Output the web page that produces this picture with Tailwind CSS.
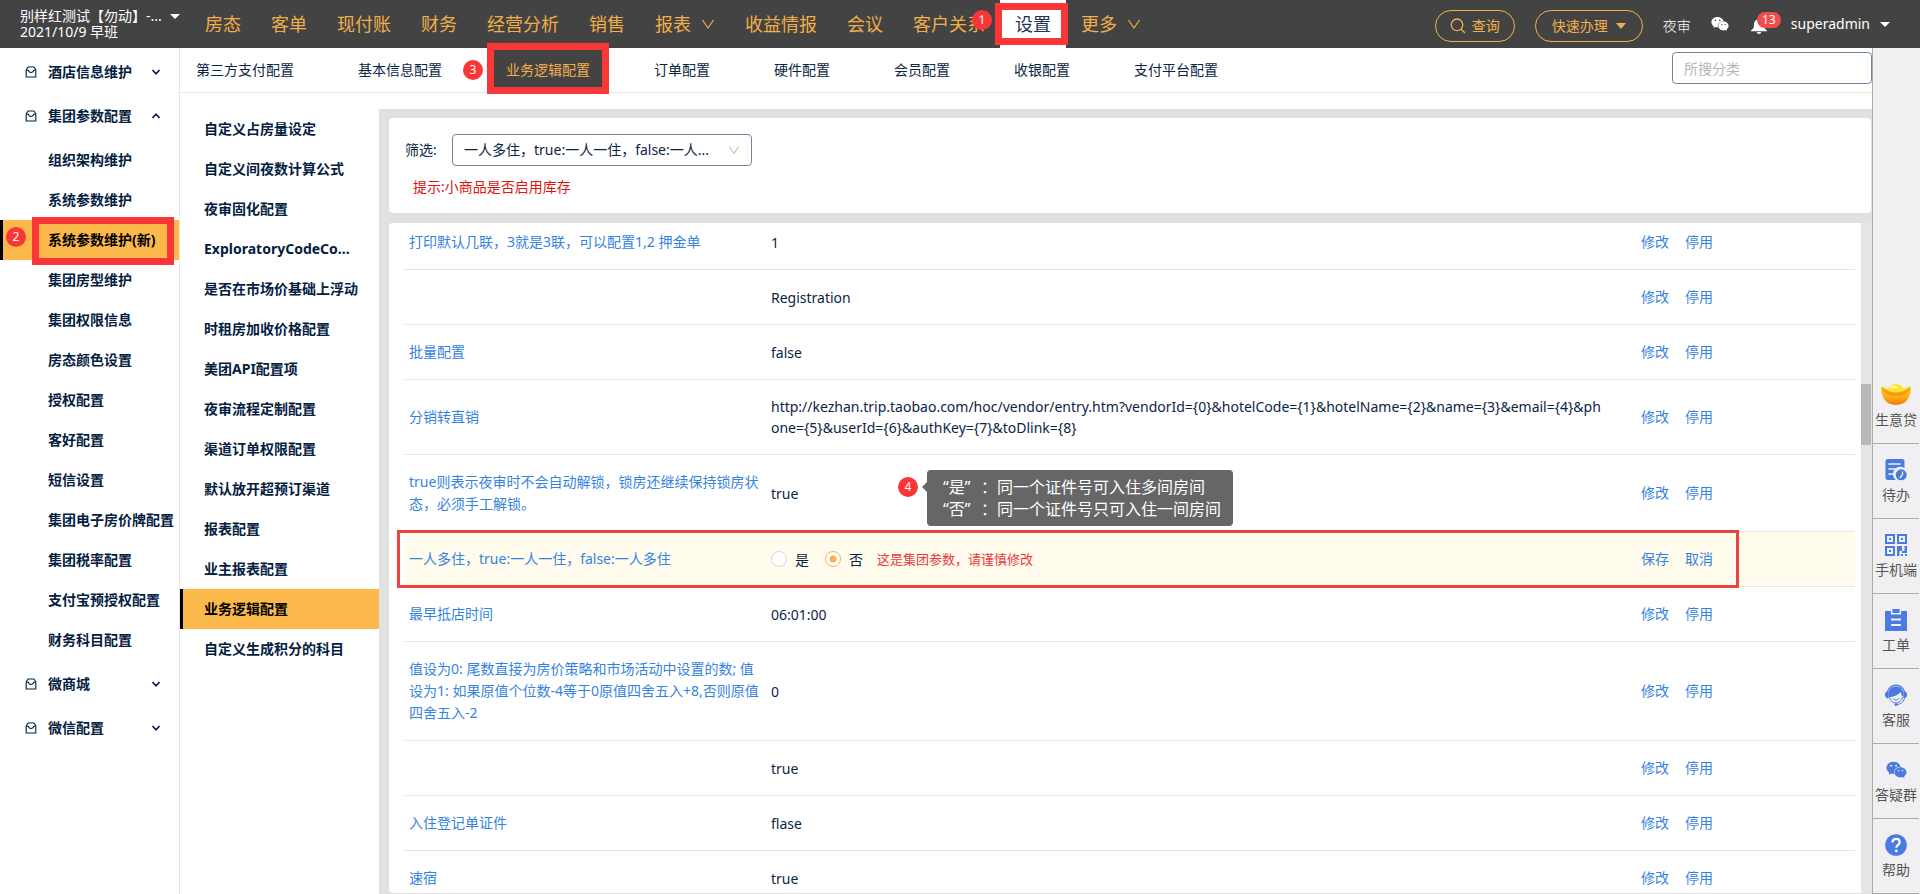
<!DOCTYPE html>
<html lang="zh-CN">
<head>
<meta charset="utf-8">
<title>业务逻辑配置</title>
<script src="https://cdn.jsdelivr.net/npm/@tailwindcss/browser@4"></script>
</head>
<body class="flex h-screen flex-col overflow-hidden bg-white font-['Noto_Sans','Noto_Sans_CJK_SC',sans-serif] text-sm text-[#0b2545]">
<svg class="hidden">
  <symbol id="wechat" viewBox="0 0 576 512"><path fill="currentColor" d="M385.2 167.6c6.4 0 12.6.3 18.8 1.1C387.4 90.3 303.3 32 207.7 32 100.5 32 13 104.8 13 197.4c0 53.4 29.3 97.5 77.9 131.6l-19.3 58.6 68-34.1c24.4 4.8 43.8 9.7 68.2 9.7 6.2 0 12.1-.3 18.3-.8-4-12.9-6.2-26.6-6.2-40.8-.1-84.9 72.9-154 165.3-154zm-104.5-52.9c14.5 0 24.2 9.7 24.2 24.4 0 14.5-9.7 24.2-24.2 24.2-14.8 0-29.3-9.7-29.3-24.2.1-14.7 14.6-24.4 29.3-24.4zm-136.4 48.6c-14.5 0-29.3-9.7-29.3-24.2 0-14.8 14.8-24.4 29.3-24.4 14.8 0 24.4 9.7 24.4 24.4 0 14.6-9.6 24.2-24.4 24.2zM563 319.4c0-77.9-77.9-141.3-165.4-141.3-92.7 0-165.4 63.4-165.4 141.3S305 460.7 397.6 460.7c19.3 0 38.9-5.1 58.6-9.9l53.4 29.3-14.8-48.6C534 402.1 563 363.2 563 319.4zm-219.1-24.5c-9.7 0-19.3-9.7-19.3-19.6 0-9.7 9.7-19.3 19.3-19.3 14.8 0 24.4 9.7 24.4 19.3 0 10-9.7 19.6-24.4 19.6zm107.1 0c-9.7 0-19.3-9.7-19.3-19.6 0-9.7 9.7-19.3 19.3-19.3 14.5 0 24.4 9.7 24.4 19.3.1 10-9.9 19.6-24.4 19.6z"/></symbol>
  <symbol id="pouch" viewBox="0 0 12 12"><g fill="none" stroke="currentColor" stroke-width="1.1"><path d="M3 1h6l1.8 3v7H1.2V4z"/><path d="M1.2 4.2h2.3c.4 3 4.6 3 5 0h2.3"/></g></symbol>
  <symbol id="down" viewBox="0 0 10 10"><path d="M1.5 3 5 6.8 8.500 3" fill="none" stroke="currentColor" stroke-width="1.7"/></symbol>
  <symbol id="up" viewBox="0 0 10 10"><path d="M1.5 7 5 3.200 8.500 7" fill="none" stroke="currentColor" stroke-width="1.7"/></symbol>
  <symbol id="thin" viewBox="0 0 14 14"><path d="M1.500 3 7 11l5.500-8" fill="none" stroke="currentColor" stroke-width="1.2"/></symbol>
  <symbol id="caret" viewBox="0 0 10 5"><path d="M0 0h10L5 5z" fill="currentColor"/></symbol>
</svg>

<header class="flex h-12 shrink-0 items-center bg-[#434343] pr-[30px] text-white">
  <button class="flex w-[190px] shrink-0 gap-2 pl-5 text-left leading-4">
    <span class="whitespace-nowrap">别样红测试【勿动】-...<br>2021/10/9 早班</span>
    <svg class="mt-[6px] h-[5px] w-[10px]"><use href="#caret"/></svg>
  </button>
  <nav class="flex h-full text-lg whitespace-nowrap text-[#f2ae49] [&>a]:flex [&>a]:items-center [&>a]:px-[15px]">
    <a href="#">房态</a>
    <a href="#">客单</a>
    <a href="#">现付账</a>
    <a href="#">财务</a>
    <a href="#">经营分析</a>
    <a href="#">销售</a>
    <a href="#" class="gap-[10px]">报表<svg class="size-[14px]"><use href="#thin"/></svg></a>
    <a href="#">收益情报</a>
    <a href="#">会议</a>
    <a href="#">客户关系</a>
    <a href="#" class="relative bg-white text-[#1f3354]">设置
      <span class="absolute -left-[5px] top-[3px] h-[42px] w-[73px] border-7 border-[#fb3636]"></span>
      <span class="absolute -left-7 top-[10px] flex size-5 items-center justify-center rounded-full bg-[#fb3636] text-xs text-white">1</span>
    </a>
    <a href="#" class="gap-[10px]">更多<svg class="size-[14px]"><use href="#thin"/></svg></a>
  </nav>
  <div class="ml-auto flex items-center whitespace-nowrap">
    <button class="mt-1 mr-5 flex h-8 w-20 items-center justify-center gap-[6px] rounded-full border border-[#f2b04a] text-[#f2b04a]">
      <svg class="size-4" viewBox="0 0 16 16" fill="none" stroke="currentColor" stroke-width="1.300"><circle cx="7" cy="6.800" r="5.800"/><path d="m11 11 4 4"/></svg>查询
    </button>
    <button class="mt-1 mr-5 flex h-8 w-[108px] items-center justify-center gap-2 rounded-full border border-[#f2b04a] text-[#f2b04a]">快速办理
      <svg class="h-[6px] w-[10px]" viewBox="0 0 10 6"><path d="M0 0h10L5 6z" fill="currentColor"/></svg>
    </button>
    <a href="#" class="mt-1 mr-5 font-light">夜审</a>
    <a href="#" aria-label="微信" class="mr-[22px]"><svg class="h-4 w-[18px]"><use href="#wechat"/></svg></a>
    <a href="#" aria-label="通知" class="relative mr-6 pt-[3px]">
      <svg class="size-4" viewBox="0 0 16 16" fill="currentColor"><path d="M8 0c.8 0 1.200.6 1.200 1.200C11.700 1.900 13 4 13 6.500c0 3 .6 4.500 3 6v.7H0v-.7c2.400-1.500 3-3 3-6 0-2.500 1.300-4.600 3.800-5.300C6.800.6 7.200 0 8 0zM5.800 14h4.400c-.2 1.200-1 2-2.200 2s-2-.8-2.200-2z"/></svg>
      <span class="absolute -top-[3px] left-[6px] flex h-4 w-6 items-center justify-center rounded-full bg-[#f24d4d] text-xs">13</span>
    </a>
    <button class="flex items-center gap-[10px]">superadmin<svg class="h-[5px] w-[10px]"><use href="#caret"/></svg></button>
  </div>
</header>

<div class="flex min-h-0 flex-1">
  <aside class="w-[180px] shrink-0 border-r border-[#e6e6e6] font-bold whitespace-nowrap text-[#04203f]">
    <nav class="flex flex-col gap-1 pt-1">
      <button class="flex h-10 items-center pr-[18px] pl-[25px]"><svg class="mr-[11px] size-3"><use href="#pouch"/></svg>酒店信息维护<svg class="ml-auto size-[10px]"><use href="#down"/></svg></button>
      <button class="flex h-10 items-center pr-[18px] pl-[25px]"><svg class="mr-[11px] size-3"><use href="#pouch"/></svg>集团参数配置<svg class="ml-auto size-[10px]"><use href="#up"/></svg></button>
      <div class="[&>a]:flex [&>a]:h-10 [&>a]:items-center [&>a]:pl-12">
        <a href="#">组织架构维护</a>
        <a href="#">系统参数维护</a>
        <a href="#" class="relative bg-[#fcb94b] text-black">系统参数维护(新)
          <span class="absolute inset-y-0 left-0 w-[3px] bg-black"></span>
          <span class="absolute top-[7px] left-[6px] flex size-5 items-center justify-center rounded-full bg-[#fb3636] text-xs font-normal text-white">2</span>
          <span class="absolute -top-[3px] left-8 h-12 w-[142px] border-7 border-[#fb3636]"></span>
        </a>
        <a href="#">集团房型维护</a>
        <a href="#">集团权限信息</a>
        <a href="#">房态颜色设置</a>
        <a href="#">授权配置</a>
        <a href="#">客好配置</a>
        <a href="#">短信设置</a>
        <a href="#">集团电子房价牌配置</a>
        <a href="#">集团税率配置</a>
        <a href="#">支付宝预授权配置</a>
        <a href="#">财务科目配置</a>
      </div>
      <button class="flex h-10 items-center pr-[18px] pl-[25px]"><svg class="mr-[11px] size-3"><use href="#pouch"/></svg>微商城<svg class="ml-auto size-[10px]"><use href="#down"/></svg></button>
      <button class="flex h-10 items-center pr-[18px] pl-[25px]"><svg class="mr-[11px] size-3"><use href="#pouch"/></svg>微信配置<svg class="ml-auto size-[10px]"><use href="#down"/></svg></button>
    </nav>
  </aside>

  <main class="flex min-w-0 flex-1 flex-col">
    <div class="flex h-[45px] shrink-0 items-center justify-between border-b border-[#e6e6e6]">
      <nav class="flex gap-16 pl-4 whitespace-nowrap">
        <a href="#">第三方支付配置</a>
        <a href="#">基本信息配置</a>
        <a href="#" class="relative text-[#f2ae49]">
          <span class="absolute -top-[17px] -left-[19px] h-[51px] w-[122px] border-7 border-[#fb3636] bg-[#434343]"></span>
          <span class="absolute top-0 -left-[43px] flex size-5 items-center justify-center rounded-full bg-[#fb3636] text-xs text-white">3</span>
          <span class="relative">业务逻辑配置</span>
        </a>
        <a href="#">订单配置</a>
        <a href="#">硬件配置</a>
        <a href="#">会员配置</a>
        <a href="#">收银配置</a>
        <a href="#">支付平台配置</a>
      </nav>
      <input type="text" aria-label="所搜分类" placeholder="所搜分类" class="mb-1 h-8 w-[200px] rounded border border-[#72879d] px-[11px] placeholder:text-[#b5b5b5]">
    </div>

    <div class="flex min-h-0 flex-1">
      <nav class="w-[199px] shrink-0 pt-4 font-bold whitespace-nowrap text-[#04203f] [&>a]:flex [&>a]:h-10 [&>a]:items-center [&>a]:pl-6">
        <a href="#">自定义占房量设定</a>
        <a href="#">自定义间夜数计算公式</a>
        <a href="#">夜审固化配置</a>
        <a href="#">ExploratoryCodeCo...</a>
        <a href="#">是否在市场价基础上浮动</a>
        <a href="#">时租房加收价格配置</a>
        <a href="#">美团API配置项</a>
        <a href="#">夜审流程定制配置</a>
        <a href="#">渠道订单权限配置</a>
        <a href="#">默认放开超预订渠道</a>
        <a href="#">报表配置</a>
        <a href="#">业主报表配置</a>
        <a href="#" class="relative bg-[#fcb94b] text-black">业务逻辑配置<span class="absolute inset-y-0 left-0 w-[3px] bg-black"></span></a>
        <a href="#">自定义生成积分的科目</a>
      </nav>

      <section class="mt-4 flex min-w-0 flex-1 flex-col gap-[10px] bg-[#e0e1e1] pt-[9px] pb-px pl-[10px]">
        <div class="mr-px shrink-0 rounded bg-white px-4 pt-4 pb-[15px]">
          <div class="flex items-center">
            <label for="filter" class="w-[47px]">筛选:</label>
            <div class="relative">
              <select id="filter" class="h-8 w-[300px] appearance-none rounded border border-[#72879d] bg-white pr-8 pl-[11px]"><option>一人多住，true:一人一住，false:一人...</option></select>
              <svg class="pointer-events-none absolute top-[10px] right-3 size-3 text-[#b8b8b8]"><use href="#thin"/></svg>
            </div>
          </div>
          <p class="mt-[10px] pl-2 leading-[22px] text-[#e11212]">提示:小商品是否启用库存</p>
        </div>

        <div class="flex min-h-0 flex-1 overflow-hidden">
          <div class="min-w-0 flex-1 overflow-hidden rounded-l bg-white px-4 pr-[6px]">
            <table class="-mt-2 w-full table-fixed border-separate border-spacing-0 leading-[22px] [&_a]:mr-4 [&_a]:text-[#3583e0] [&_td]:border-b [&_td]:border-[#e4e4e4] [&_td]:py-4 [&_td]:pl-1 [&_td]:break-all [&_td:first-child]:text-[#3583e0] [&_td:nth-child(2)]:leading-[21px]">
              <colgroup><col class="w-[362px]"><col><col class="w-[218px]"></colgroup>
              <tbody>
                <tr><td>打印默认几联，3就是3联，可以配置1,2 押金单</td><td>1</td><td><a href="#">修改</a><a href="#">停用</a></td></tr>
                <tr><td></td><td>Registration</td><td><a href="#">修改</a><a href="#">停用</a></td></tr>
                <tr><td>批量配置</td><td>false</td><td><a href="#">修改</a><a href="#">停用</a></td></tr>
                <tr><td>分销转直销</td><td>http://kezhan.trip.taobao.com/hoc/vendor/entry.htm?vendorId={0}&amp;hotelCode={1}&amp;hotelName={2}&amp;name={3}&amp;email={4}&amp;ph<br>one={5}&amp;userId={6}&amp;authKey={7}&amp;toDlink={8}</td><td><a href="#">修改</a><a href="#">停用</a></td></tr>
                <tr><td>true则表示夜审时不会自动解锁，锁房还继续保持锁房状态，必须手工解锁。</td>
                  <td class="relative">true
                    <span class="absolute top-[22px] left-[131px] flex size-5 items-center justify-center rounded-full bg-[#fb3636] text-xs text-white">4</span>
                    <div role="tooltip" class="absolute top-[15px] left-[160px] h-14 w-[306px] rounded bg-[#666] py-[6px] pl-4 text-base leading-[22px] whitespace-nowrap text-white">
                      <svg class="absolute top-3 -left-[5px] h-[10px] w-[5px]" viewBox="0 0 5 10"><path d="M5 0v10L0 5z" fill="#666"/></svg>
                      <p class="flex"><span class="w-[38px]">“是”</span>：同一个证件号可入住多间房间</p>
                      <p class="flex"><span class="w-[38px]">“否”</span>：同一个证件号只可入住一间房间</p>
                    </div>
                  </td><td><a href="#">修改</a><a href="#">停用</a></td></tr>
                <tr class="relative bg-[#fffcee]"><td>一人多住，true:一人一住，false:一人多住<span class="pointer-events-none absolute -top-[2px] right-[116px] -bottom-px -left-2 border-3 border-[#ea4340]"></span></td>
                  <td><div class="flex items-center">
                    <label class="mr-4 flex items-center gap-2"><input type="radio" name="multi" class="size-4 appearance-none rounded-full border border-[#d9d9d9] bg-white">是</label>
                    <label class="mr-[14px] flex items-center gap-2"><input type="radio" name="multi" checked class="size-4 appearance-none rounded-full border border-[#f6b455] bg-white checked:bg-[radial-gradient(circle,#fbb040_3px,#fff_4px)]">否</label>
                    <span class="text-[13px] text-[#e83a3a]">这是集团参数，请谨慎修改</span>
                  </div></td><td><a href="#">保存</a><a href="#">取消</a></td></tr>
                <tr><td>最早抵店时间</td><td>06:01:00</td><td><a href="#">修改</a><a href="#">停用</a></td></tr>
                <tr><td>值设为0: 尾数直接为房价策略和市场活动中设置的数; 值设为1: 如果原值个位数-4等于0原值四舍五入+8,否则原值四舍五入-2</td><td>0</td><td><a href="#">修改</a><a href="#">停用</a></td></tr>
                <tr><td></td><td>true</td><td><a href="#">修改</a><a href="#">停用</a></td></tr>
                <tr><td>入住登记单证件</td><td>flase</td><td><a href="#">修改</a><a href="#">停用</a></td></tr>
                <tr><td>速宿</td><td>true</td><td><a href="#">修改</a><a href="#">停用</a></td></tr>
              </tbody>
            </table>
          </div>
          <div class="w-[11px] shrink-0 bg-[#e5e6e6] pt-[161px]"><div class="h-[61px] w-[10px] bg-[#b8b9b9]"></div></div>
        </div>
      </section>
    </div>
  </main>

  <aside class="flex w-12 shrink-0 flex-col justify-end border-l border-[#ababab] bg-[#f0f0f2] pr-px whitespace-nowrap text-[#555] [&>a]:flex [&>a]:h-[75px] [&>a]:flex-col [&>a]:items-center [&>a]:border-b [&>a]:border-[#ababab] [&>a]:pt-[15px] [&>a]:leading-[22px] [&_svg]:mb-[3px] [&_svg]:h-[22px] [&_svg]:shrink-0 [&_svg]:text-[#4a7be0]">
    <a href="#"><svg class="w-[30px]" viewBox="0 0 30 22"><defs><linearGradient id="gold" x1="0" y1="0" x2="0" y2="1"><stop offset="0" stop-color="#ffd320"/><stop offset=".5" stop-color="#fdb515"/><stop offset="1" stop-color="#f07808"/></linearGradient></defs><path d="M0 3c5-.3 6 2 6 2h18s1-2.300 6-2c0 9-4 18-15 18S0 12 0 3z" fill="url(#gold)"/><path d="M1 3.500C8 10 22 10 29 3.500c-1 5.500-6 8.500-14 8.500S2 9 1 3.500z" fill="#f79c10"/><path d="M6.500 6C8 2.500 11 0 15 0s7 2.500 8.500 6c-4 3.200-13 3.200-17 0z" fill="#ffe23a"/><ellipse cx="13" cy="3" rx="3.500" ry="1.300" fill="#fff7a0"/></svg>生意贷</a>
    <a href="#"><svg class="w-[22px]" viewBox="0 0 22 22"><path d="M3 0h14a2.500 2.500 0 0 1 2.500 2.500V9A7 7 0 0 0 11 21H3a2.500 2.500 0 0 1-2.500-2.500v-16A2.500 2.500 0 0 1 3 0z" fill="currentColor"/><path d="M4 5h11M4 10h6M4 15h4" stroke="#f0f0f2" stroke-width="1.700" stroke-linecap="round"/><circle cx="16.200" cy="15.800" r="5.500" fill="currentColor"/><path d="M17.500 12.500v3l-2.500 3.500" fill="none" stroke="#f0f0f2" stroke-width="1.300"/></svg>待办</a>
    <a href="#"><svg class="w-[22px]" viewBox="0 0 22 22"><g fill="none" stroke="currentColor" stroke-width="2"><path d="M1 1h8v8H1zM13 1h8v8h-8zM1 13h8v8H1z"/></g><path fill="currentColor" d="M4 4h2v2H4zM16 4h2v2h-2zM4 16h2v2H4zM12 12h2.500v10H12zM14.500 12H17v5h2.500v-5H22v7h-5v-2h-2.500zM16 20h2v2h-2zM20 20h2v2h-2z"/></svg>手机端</a>
    <a href="#"><svg class="w-[22px]" viewBox="0 0 22 22"><path d="M0 2h6v3.500h10V2h6v20H0z" fill="currentColor"/><path d="M7.500 0h7v4h-7z" fill="currentColor"/><path d="M6 10.500h10M6 16h10" stroke="#f0f0f2" stroke-width="2"/></svg>工单</a>
    <a href="#"><svg class="w-[22px]" viewBox="0 0 22 22"><path d="M2.500 8a8.700 8.700 0 0 1 17 0" fill="none" stroke="currentColor" stroke-width="1.200"/><path d="M3.500 13C2.500 6 6 2.300 11 2.300S19.500 6 18.500 13c-1.500-.5-2.300-2.500-2.700-5C13 11 9 12.500 5.500 13z" fill="currentColor"/><path d="M0 10.500C0 8.500 1.500 7 3.500 7v7.500C1.500 14.500 0 13 0 10.500zM22 10.500C22 8.500 20.500 7 18.500 7v7.500c2 0 3.500-1.500 3.500-4z" fill="currentColor"/><path d="M4.500 13c1 4 3.500 6 6.500 6s5.500-2 6.500-6M8 14.500c1.500 2 4.500 2 6 0M19.500 14.500c-1 3.500-4 6-8 6" fill="none" stroke="currentColor" stroke-width="1"/><circle cx="11" cy="20.500" r="1.500" fill="currentColor"/></svg>客服</a>
    <a href="#"><svg class="w-[21px]"><use href="#wechat"/></svg>答疑群</a>
    <a href="#"><svg class="w-[22px]" viewBox="0 0 22 22"><circle cx="11" cy="11" r="10.800" fill="currentColor"/><path d="M7.500 8.500c0-2.300 1.500-3.600 3.600-3.600s3.600 1.300 3.600 3.300c0 2.600-3.400 2.700-3.400 5.600" fill="none" stroke="#fff" stroke-width="2.200"/><circle cx="11.300" cy="16.800" r="1.400" fill="#fff"/></svg>帮助</a>
  </aside>
</div>
</body>
</html>
